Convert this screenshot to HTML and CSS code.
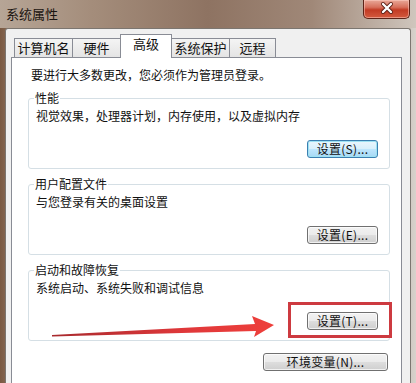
FILE: index.html
```html
<!DOCTYPE html>
<html lang="zh-CN">
<head>
    <meta charset="UTF-8">
    <title>系统属性</title>
    <link rel="stylesheet" href="styles.css">
</head>
<body>

<div class="window">
    <div class="titlebar">
        <span class="title">系统属性</span>
        <span class="close-btn">
            <svg width="47" height="19" viewBox="0 0 47 19">
                <path d="M20 5 L28 13 M28 5 L20 13" stroke="#5a1e14" stroke-width="4" stroke-linecap="round"/>
                <path d="M20 5 L28 13 M28 5 L20 13" stroke="#ffffff" stroke-width="2.4" stroke-linecap="round"/>
            </svg>
        </span>
    </div>

    <div class="dialog">
        <div class="tabs">
            <div class="tab" style="width: 59px">计算机名</div>
            <div class="tab" style="width: 49px">硬件</div>
            <div class="tab active" style="width: 52px">高级</div>
            <div class="tab" style="width: 59px">系统保护</div>
            <div class="tab" style="width: 47px">远程</div>
        </div>

        <div class="panel">
            <p class="intro">要进行大多数更改，您必须作为管理员登录。</p>

            <fieldset class="group">
                <legend>性能</legend>
                <p class="desc">视觉效果，处理器计划，内存使用，以及虚拟内存</p>
                <div class="btn-row">
                    <button class="btn btn-focus">设置(S)...</button>
                </div>
            </fieldset>

            <fieldset class="group">
                <legend>用户配置文件</legend>
                <p class="desc">与您登录有关的桌面设置</p>
                <div class="btn-row">
                    <button class="btn">设置(E)...</button>
                </div>
            </fieldset>

            <fieldset class="group">
                <legend>启动和故障恢复</legend>
                <p class="desc">系统启动、系统失败和调试信息</p>
                <div class="btn-row">
                    <button class="btn">设置(T)...</button>
                </div>
            </fieldset>

            <div class="btn-row env-row">
                <button class="btn btn-wide">环境变量(N)...</button>
            </div>
        </div>
    </div>
</div>

<!-- красная рамка и стрелка поверх окна -->
<div class="mark-box"></div>
<svg class="mark-arrow" width="416" height="383" viewBox="0 0 416 383">
    <defs>
        <linearGradient id="arrowFill" x1="0" y1="0" x2="1" y2="0">
            <stop offset="0" stop-color="#a82a2e"/>
            <stop offset="0.6" stop-color="#e0383a"/>
            <stop offset="1" stop-color="#ee3f3b"/>
        </linearGradient>
    </defs>
    <polygon points="52,335 255,324 252,316 274,325 254,337 256,331 52,336.5" fill="url(#arrowFill)"/>
</svg>

</body>
</html>
```

FILE: styles.css
```css
body {
    margin: 0;
    width: 416px;
    height: 383px;
    overflow: hidden;
    position: relative;
    font-family: "Noto Sans CJK SC", "Liberation Sans", sans-serif;
    font-size: 12px;
    color: #111;
}
.window {
    height: 383px;
    display: flex;
    flex-direction: column;
    background: linear-gradient(90deg, #7a5942 0, #8f735f 3%, #a08a7a 50%, #c9c1b9 97%, #d8d2cc 100%);
}
.titlebar {
    height: 28px;
    flex: none;
    display: flex;
    justify-content: space-between;
    align-items: flex-start;
    background: linear-gradient(90deg, #b6a596 0%, #a48d7b 22%, #8e7362 50%, #a08878 75%, #cfc6bd 100%);
}
.title {
    margin: 6px 0 0 6px;
    font-size: 13px;
    line-height: 16px;
    color: #1a1410;
}
.close-btn {
    width: 47px;
    height: 19px;
    margin-right: 6px;
    border: 1px solid #5c2418;
    border-top: none;
    border-radius: 0 0 5px 5px;
    box-sizing: border-box;
    background: linear-gradient(#e9a898 0%, #d7705c 40%, #c23b24 55%, #d35a3e 100%);
    box-shadow: inset 0 0 0 1px rgba(255, 210, 200, 0.5);
    overflow: hidden;
}
.close-btn svg {
    display: block;
    margin: -1px 0 0 -1px;
}
.dialog {
    flex: 1;
    margin-left: 5px;
    width: 406px;
    box-sizing: border-box;
    background: #f0f0f0;
    border: 1px solid #7c7670;
    border-bottom: none;
    border-radius: 3px 3px 0 0;
    padding: 5px 8px 0 5px;
    display: flex;
    flex-direction: column;
}
.tabs {
    display: flex;
    align-items: flex-end;
    height: 23px;
    padding-left: 3px;
}
.tab {
    height: 19px;
    box-sizing: border-box;
    border: 1px solid #898c95;
    border-bottom: none;
    margin-left: -1px;
    background: linear-gradient(#f4f4f4, #e4e4e4);
    font-size: 13px;
    line-height: 18px;
    text-align: center;
    color: #111;
}
.tab:first-child {
    margin-left: 0;
}
.tab.active {
    height: 24px;
    margin-bottom: -1px;
    padding-top: 1px;
    line-height: 16px;
    background: #fff;
    position: relative;
    z-index: 1;
}
.panel {
    flex: 1;
    background: #fff;
    border: 1px solid #898c95;
    border-bottom: none;
    padding: 10px 11px 0 16px;
}
.intro {
    margin: 0 0 9px 3px;
    line-height: 14px;
}
.group {
    margin: 0;
    padding: 0 11px 10px 7px;
    border: 1px solid #d5dfe5;
    border-radius: 3px;
    min-width: 0;
}
.group + .group {
    margin-top: 8px;
}
.group legend {
    padding: 0 1px;
    margin-left: -2px;
    line-height: 14px;
}
.desc {
    margin: 4px 0 0;
    line-height: 14px;
}
.btn-row {
    display: flex;
    justify-content: flex-end;
    margin-top: 17px;
}
.env-row {
    margin-top: 12px;
    padding-right: 2px;
}
.btn {
    width: 71px;
    height: 18px;
    padding: 0;
    font-family: inherit;
    font-size: 12px;
    line-height: 16px;
    color: #111;
    letter-spacing: 0.3px;
    border: 1px solid #707070;
    border-radius: 3px;
    background: linear-gradient(#f2f2f2 0%, #ebebeb 48%, #dddddd 52%, #cfcfcf 100%);
    box-shadow: inset 0 0 0 1px rgba(255, 255, 255, 0.7);
}
.btn-focus {
    border-color: #3c7fb1;
    background: linear-gradient(#eaf6fd 0%, #d9f0fc 48%, #bee6fd 52%, #a7d9f5 100%);
    box-shadow: inset 0 0 0 1px #9ee2f3;
}
.btn-wide {
    width: 125px;
}
.mark-box {
    position: absolute;
    left: 288px;
    top: 302px;
    width: 104px;
    height: 36px;
    box-sizing: border-box;
    border: 3px solid #cd3a40;
}
.mark-arrow {
    position: absolute;
    left: 0;
    top: 0;
    pointer-events: none;
}
```
